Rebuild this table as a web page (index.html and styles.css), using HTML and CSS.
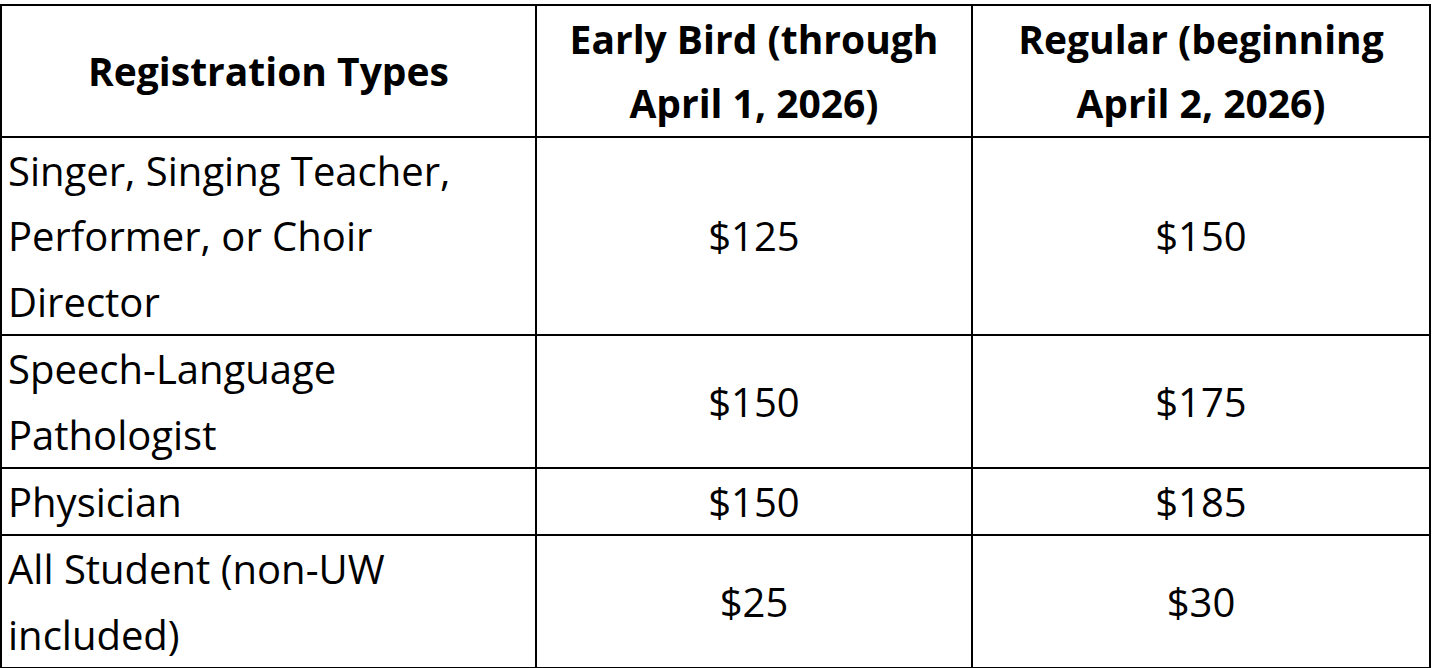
FILE: index.html
```html
<!DOCTYPE html>
<html lang="en">
<head>
<meta charset="utf-8">
<title>Registration Types</title>
<link rel="stylesheet" href="styles.css">
</head>
<body>
<table class="fees">
  <colgroup>
    <col class="col-type">
    <col class="col-early">
    <col class="col-regular">
  </colgroup>
  <thead>
    <tr>
      <th>Registration Types</th>
      <th>Early Bird (through<br>April 1, 2026)</th>
      <th>Regular (beginning<br>April 2, 2026)</th>
    </tr>
  </thead>
  <tbody>
    <tr>
      <td class="type">Singer, Singing Teacher,<br>Performer, or Choir<br>Director</td>
      <td class="price">$125</td>
      <td class="price">$150</td>
    </tr>
    <tr>
      <td class="type">Speech-Language<br>Pathologist</td>
      <td class="price">$150</td>
      <td class="price">$175</td>
    </tr>
    <tr>
      <td class="type">Physician</td>
      <td class="price">$150</td>
      <td class="price">$185</td>
    </tr>
    <tr>
      <td class="type">All Student (non-UW<br>included)</td>
      <td class="price">$25</td>
      <td class="price">$30</td>
    </tr>
  </tbody>
</table>
</body>
</html>
```

FILE: styles.css
```css
html, body {
  margin: 0;
  padding: 0;
  background: #ffffff;
}

body {
  padding-top: 4px;
  font-family: "Open Sans", "Liberation Sans", sans-serif;
  color: #000000;
}

.fees {
  border-collapse: collapse;
  table-layout: fixed;
  width: 1429px;
}

.col-type { width: 535px; }
.col-early { width: 436px; }
.col-regular { width: 458px; }

.fees th,
.fees td {
  border: 2px solid #000000;
  vertical-align: middle;
  white-space: nowrap;
}

.fees th {
  font-size: 39px;
  font-weight: 700;
  text-align: center;
  line-height: 64px;
  padding: 1px 6px;
}

.fees td {
  font-size: 40px;
  line-height: 65.4px;
  padding: 0 6px;
}

.fees td.type {
  text-align: left;
}

.fees td.price {
  text-align: center;
}
```
